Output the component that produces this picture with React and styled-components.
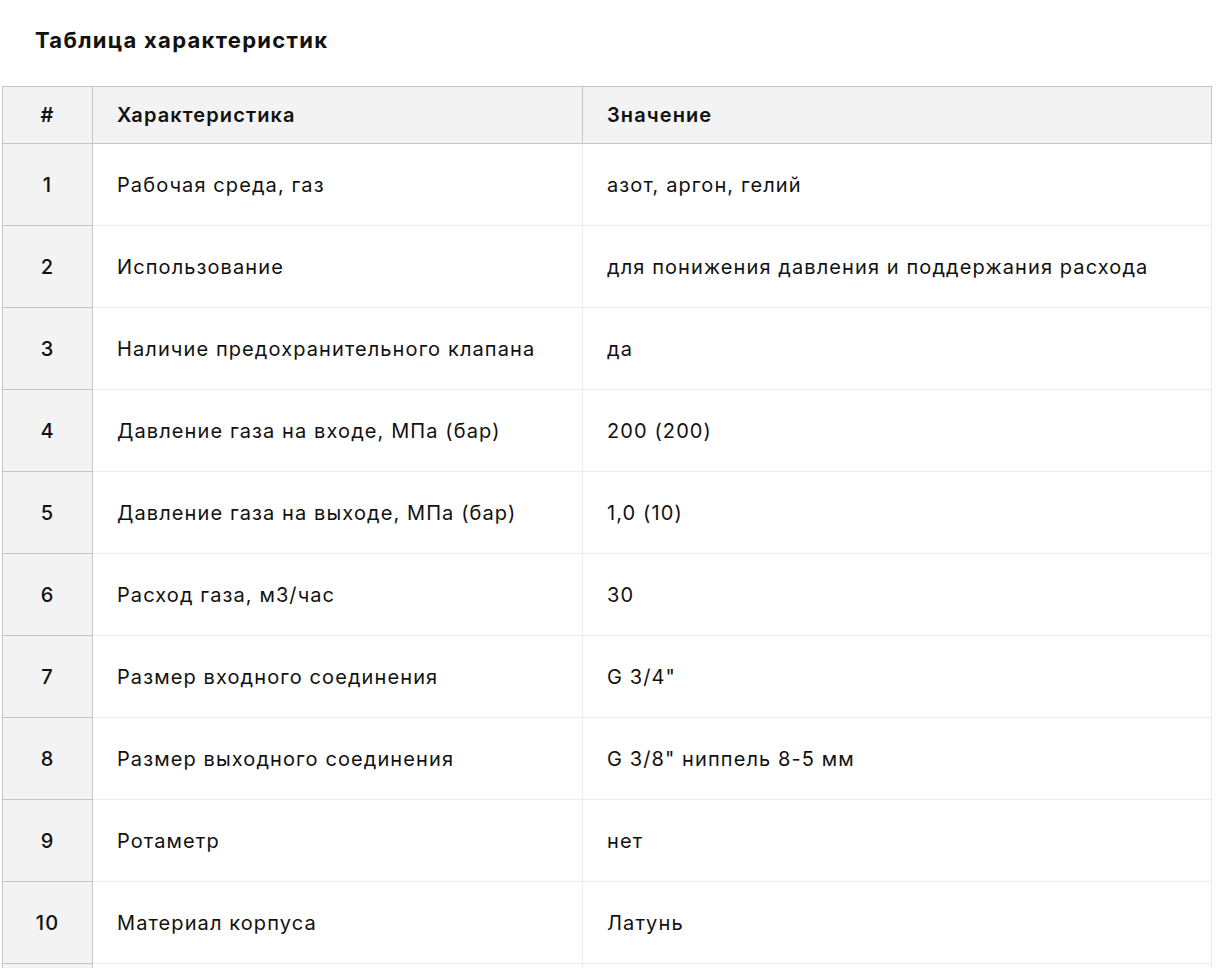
import React from "react";
import styled, { createGlobalStyle } from "styled-components";

const rows = [
  ["Рабочая среда, газ", "азот, аргон, гелий"],
  ["Использование", "для понижения давления и поддержания расхода"],
  ["Наличие предохранительного клапана", "да"],
  ["Давление газа на входе, МПа (бар)", "200 (200)"],
  ["Давление газа на выходе, МПа (бар)", "1,0 (10)"],
  ["Расход газа, м3/час", "30"],
  ["Размер входного соединения", 'G 3/4"'],
  ["Размер выходного соединения", 'G 3/8" ниппель 8-5 мм'],
  ["Ротаметр", "нет"],
  ["Материал корпуса", "Латунь"],
];

const GlobalStyle = createGlobalStyle`
  body {
    margin: 0;
    background: #fff;
    font-family: Inter, "Noto Sans", sans-serif;
    color: #111;
    overflow: hidden;
  }
`;

const Page = styled.div`
  height: 968px;
  overflow: hidden;
  padding-left: 2px;
`;

const Title = styled.h2`
  margin: 0;
  height: 86px;
  display: flex;
  align-items: center;
  padding-left: 33px;
  padding-bottom: 6px;
  box-sizing: border-box;
  font-size: 22px;
  letter-spacing: 1.3px;
  font-weight: 700;
`;

const Table = styled.table`
  width: 1210px;
  border-collapse: collapse;
  table-layout: fixed;
  font-size: 20px;
  letter-spacing: 1.1px;
`;

const HeadCell = styled.th`
  height: 56px;
  background: #f3f3f3;
  border: 1px solid #c6c6c6;
  font-weight: 600;
  text-align: ${(p) => (p.center ? "center" : "left")};
  padding: 0 ${(p) => (p.center ? "0" : "24px")};
`;

const NumCell = styled.td`
  height: 79px;
  background: #f3f3f3;
  border: 1px solid #c6c6c6;
  text-align: center;
  font-weight: 500;
`;

const Cell = styled.td`
  height: 79px;
  border: 1px solid #ececec;
  padding: 0 24px;
  font-weight: 400;
`;

const App = () => (
  <Page>
    <GlobalStyle />
    <Title>Таблица характеристик</Title>
    <Table>
      <colgroup>
        <col style={{ width: 90 }} />
        <col style={{ width: 490 }} />
        <col />
      </colgroup>
      <thead>
        <tr>
          <HeadCell center>#</HeadCell>
          <HeadCell>Характеристика</HeadCell>
          <HeadCell>Значение</HeadCell>
        </tr>
      </thead>
      <tbody>
        {rows.map((r, i) => (
          <tr key={i}>
            <NumCell>{i + 1}</NumCell>
            <Cell>{r[0]}</Cell>
            <Cell>{r[1]}</Cell>
          </tr>
        ))}
        <tr>
          <NumCell />
          <Cell />
          <Cell />
        </tr>
      </tbody>
    </Table>
  </Page>
);

export default App;
